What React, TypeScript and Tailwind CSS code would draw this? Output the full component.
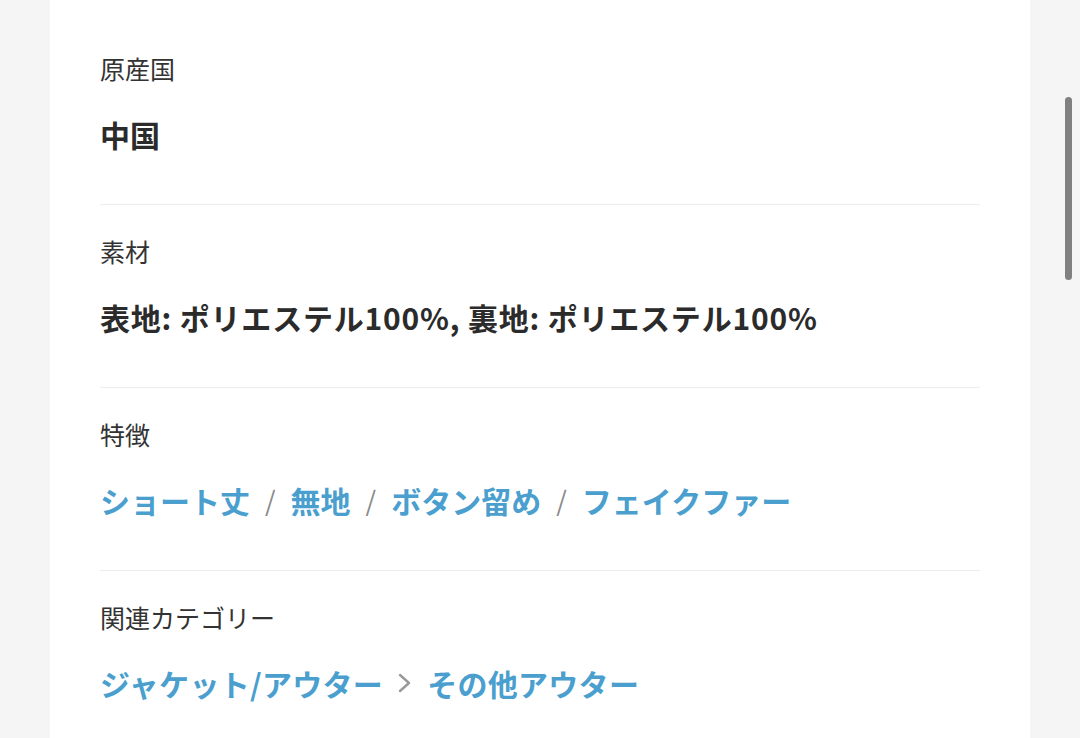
import React from "react";

const font = { fontFamily: '"Noto Sans CJK JP", "Noto Sans", sans-serif' };

function Section({ label, children, last }: { label: string; children: React.ReactNode; last?: boolean }) {
  return (
    <div className={`pt-[28px] pb-[50px] ${last ? "" : "border-b border-[#ececec]"}`}>
      <div className="text-[25px] leading-[36px] text-[#333333]">{label}</div>
      <div className="mt-[28px] text-[30px] leading-[40px] font-bold">{children}</div>
    </div>
  );
}

export default function App() {
  return (
    <div className="w-[1080px] h-[738px] bg-[#f5f5f5] relative overflow-hidden" style={font}>
      <div className="ml-[50px] w-[980px] h-full bg-white pt-[22px] px-[50px]">
        <Section label="原産国">
          <span className="text-[#2b2b2b]">中国</span>
        </Section>
        <Section label="素材">
          <span className="text-[#2b2b2b] tracking-[0.8px]">表地: ポリエステル100%, 裏地: ポリエステル100%</span>
        </Section>
        <Section label="特徴">
          <div className="flex items-center text-[#4a9fcf]">
            <span>ショート丈</span>
            <span className="mx-[15px] text-[#8a8a8a] font-normal text-[27px]">/</span>
            <span>無地</span>
            <span className="mx-[15px] text-[#8a8a8a] font-normal text-[27px]">/</span>
            <span>ボタン留め</span>
            <span className="mx-[15px] text-[#8a8a8a] font-normal text-[27px]">/</span>
            <span>フェイクファー</span>
          </div>
        </Section>
        <Section label="関連カテゴリー" last>
          <div className="flex items-center text-[#4a9fcf] tracking-[0.3px]">
            <span>ジャケット/アウター</span>
            <svg width="16" height="24" viewBox="0 0 16 24" className="mx-[14px]">
              <path d="M3 4 L12 12 L3 20" fill="none" stroke="#999999" strokeWidth="2.4" strokeLinecap="round" strokeLinejoin="round" />
            </svg>
            <span>その他アウター</span>
          </div>
        </Section>
      </div>
      <div className="absolute left-[1065px] top-[97px] w-[7px] h-[183px] rounded-full bg-[#808080]" />
    </div>
  );
}
